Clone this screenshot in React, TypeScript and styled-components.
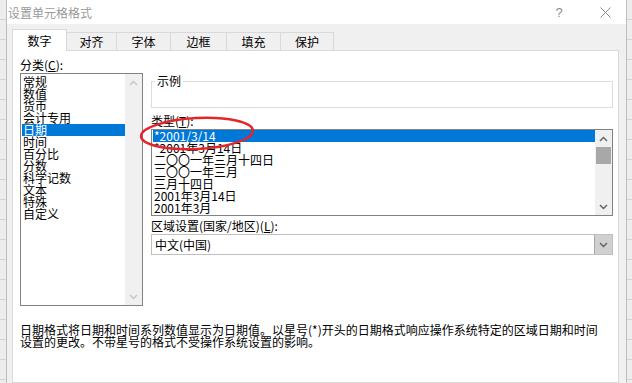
import styled, { createGlobalStyle } from 'styled-components';

const GlobalStyle = createGlobalStyle`
  html, body {
    margin: 0;
    padding: 0;
    overflow: hidden;
  }
  body {
    background: #e6e6e6;
    font-family: "Noto Sans CJK SC", "Liberation Sans", sans-serif;
    font-size: 12px;
    color: #000;
  }
`;

const Screen = styled.div`
  display: flex;
  width: 632px;
  height: 383px;
  overflow: hidden;
`;

const SheetEdge = styled.div<{ $w: number }>`
  width: ${(p) => p.$w}px;
  flex-shrink: 0;
  background: repeating-linear-gradient(
    to bottom,
    #ededed 0,
    #ededed 19px,
    #d4d4d4 19px,
    #d4d4d4 20px
  );
`;

const Dialog = styled.div`
  flex: 1;
  display: flex;
  flex-direction: column;
  background: #f0f0f0;
  border-left: 1px solid #bdbdbd;
  border-right: 1px solid #bdbdbd;
`;

const TitleBar = styled.div`
  height: 24px;
  flex-shrink: 0;
  display: flex;
  align-items: center;
  padding-left: 1px;
  background: #fff;
  color: #9a9a9a;
`;

const TitleButtons = styled.div`
  margin-left: auto;
  display: flex;
  align-items: center;
  gap: 13px;
  padding-right: 3px;
`;

const TitleButton = styled.div<{ $w: number }>`
  width: ${(p) => p.$w}px;
  height: 24px;
  display: flex;
  align-items: center;
  justify-content: center;
  color: #8a8a8a;
  font-family: "Liberation Sans", sans-serif;
  font-size: 13px;
`;

const TabRow = styled.div`
  height: 26px;
  flex-shrink: 0;
  display: flex;
  align-items: flex-end;
  padding-left: 5px;
`;

const Tab = styled.div<{ $active?: boolean; $w: number }>`
  box-sizing: border-box;
  width: ${(p) => p.$w}px;
  height: ${(p) => (p.$active ? 22 : 18)}px;
  margin-bottom: ${(p) => (p.$active ? -1 : 0)}px;
  display: flex;
  align-items: center;
  justify-content: center;
  border: 1px solid #d9d9d9;
  border-bottom: none;
  background: ${(p) => (p.$active ? '#fff' : '#f0f0f0')};
  position: relative;
  z-index: ${(p) => (p.$active ? 1 : 0)};
  line-height: 12px;

  & + & {
    margin-left: -1px;
  }
`;

const Panel = styled.div`
  flex: 1;
  margin: 0 7px 0 5px;
  padding: 6px 5px 0 7px;
  background: #fff;
  border: 1px solid #d9d9d9;
  display: flex;
  flex-direction: column;
`;

const Columns = styled.div`
  display: grid;
  grid-template-columns: 123px 462px;
  column-gap: 8px;
`;

const Column = styled.div`
  display: flex;
  flex-direction: column;
`;

const FieldLabel = styled.div<{ $top?: number }>`
  margin-top: ${(p) => p.$top ?? 0}px;
  line-height: 16px;
  height: 16px;
`;

const ListBox = styled.div<{ $h: number }>`
  box-sizing: border-box;
  height: ${(p) => p.$h}px;
  border: 1px solid #828282;
  display: flex;
  background: #fff;
`;

const ListItems = styled.div<{ $padTop: number }>`
  flex: 1;
  padding: ${(p) => p.$padTop}px 0 0 1px;
  overflow: hidden;
`;

const ListItem = styled.div<{ $selected?: boolean }>`
  height: 12px;
  line-height: 12px;
  padding-left: 1px;
  white-space: nowrap;
  background: ${(p) => (p.$selected ? '#0078d7' : 'transparent')};
  color: ${(p) => (p.$selected ? '#fff' : '#000')};
`;

const ScrollBar = styled.div`
  width: 17px;
  flex-shrink: 0;
  display: flex;
  flex-direction: column;
  background: #f0f0f0;
`;

const ScrollArrow = styled.div`
  height: 17px;
  flex-shrink: 0;
  display: flex;
  align-items: center;
  justify-content: center;
`;

const ScrollTrack = styled.div`
  flex: 1;
`;

const ScrollThumb = styled.div`
  height: 17px;
  margin: 0 1px;
  background: #a8a8a8;
`;

const SampleBox = styled.div`
  position: relative;
  box-sizing: border-box;
  height: 27px;
  margin-top: 24px;
  border: 1px solid #dcdcdc;
`;

const SampleLegend = styled.span`
  position: absolute;
  left: 3px;
  top: -7px;
  padding: 0 2px;
  line-height: 12px;
  background: #fff;
`;

const TypeField = styled.div`
  position: relative;
  display: flex;
  flex-direction: column;
  margin-top: 5px;
`;

const Annotation = styled.svg`
  position: absolute;
  left: -13px;
  top: 1px;
  pointer-events: none;
`;

const Select = styled.div`
  box-sizing: border-box;
  height: 21px;
  display: flex;
  align-items: stretch;
  border: 1px solid #bfbfbf;
  background: #fff;
`;

const SelectValue = styled.div`
  flex: 1;
  display: flex;
  align-items: center;
  padding-left: 3px;
`;

const SelectButton = styled.div`
  width: 17px;
  display: flex;
  align-items: center;
  justify-content: center;
  background: #d0d0d0;
  border-left: 1px solid #a8a8a8;
`;

const Description = styled.div`
  margin-top: 18px;
  line-height: 12px;
`;

const Chevron = ({ dir, color }: { dir: 'up' | 'down'; color: string }) => (
  <svg width="9" height="6" viewBox="0 0 9 6">
    <polyline
      points={dir === 'up' ? '1,5 4.5,1.5 8,5' : '1,1 4.5,4.5 8,1'}
      fill="none"
      stroke={color}
      strokeWidth="1.4"
    />
  </svg>
);

const tabs = [
  { label: '数字', w: 55 },
  { label: '对齐', w: 51 },
  { label: '字体', w: 55 },
  { label: '边框', w: 57 },
  { label: '填充', w: 55 },
  { label: '保护', w: 54 },
];

const categories = [
  '常规',
  '数值',
  '货币',
  '会计专用',
  '日期',
  '时间',
  '百分比',
  '分数',
  '科学记数',
  '文本',
  '特殊',
  '自定义',
];

const dateTypes = [
  '*2001/3/14',
  '*2001年3月14日',
  '二〇〇一年三月十四日',
  '二〇〇一年三月',
  '三月十四日',
  '2001年3月14日',
  '2001年3月',
];

const App = () => {
  return (
    <>
      <GlobalStyle />
      <Screen>
        <SheetEdge $w={6} />
        <Dialog>
          <TitleBar>
            设置单元格格式
            <TitleButtons>
              <TitleButton $w={30}>?</TitleButton>
              <TitleButton $w={36}>
                <svg width="11" height="11" viewBox="0 0 11 11">
                  <path d="M0.5 0.5 L10.5 10.5 M10.5 0.5 L0.5 10.5" stroke="#8a8a8a" strokeWidth="1" />
                </svg>
              </TitleButton>
            </TitleButtons>
          </TitleBar>

          <TabRow>
            {tabs.map((t, i) => (
              <Tab key={t.label} $w={t.w} $active={i === 0}>
                {t.label}
              </Tab>
            ))}
          </TabRow>

          <Panel>
            <Columns>
              <Column>
                <FieldLabel>
                  分类(<u>C</u>):
                </FieldLabel>
                <ListBox $h={233}>
                  <ListItems $padTop={2}>
                    {categories.map((c) => (
                      <ListItem key={c} $selected={c === '日期'}>
                        {c}
                      </ListItem>
                    ))}
                  </ListItems>
                  <ScrollBar>
                    <ScrollArrow>
                      <Chevron dir="up" color="#c4c4c4" />
                    </ScrollArrow>
                    <ScrollTrack />
                    <ScrollArrow>
                      <Chevron dir="down" color="#c4c4c4" />
                    </ScrollArrow>
                  </ScrollBar>
                </ListBox>
              </Column>

              <Column>
                <SampleBox>
                  <SampleLegend>示例</SampleLegend>
                </SampleBox>

                <TypeField>
                  <FieldLabel>
                    类型(<u>T</u>):
                  </FieldLabel>
                  <ListBox $h={87}>
                    <ListItems $padTop={0}>
                      {dateTypes.map((d, i) => (
                        <ListItem key={d} $selected={i === 0}>
                          {d}
                        </ListItem>
                      ))}
                    </ListItems>
                    <ScrollBar>
                      <ScrollArrow>
                        <Chevron dir="up" color="#606060" />
                      </ScrollArrow>
                      <ScrollThumb />
                      <ScrollTrack />
                      <ScrollArrow>
                        <Chevron dir="down" color="#606060" />
                      </ScrollArrow>
                    </ScrollBar>
                  </ListBox>
                  <Annotation width="120" height="40" viewBox="0 0 120 40">
                    <ellipse
                      cx="59"
                      cy="19.5"
                      rx="56"
                      ry="15.5"
                      fill="none"
                      stroke="#e3262a"
                      strokeWidth="2.5"
                      transform="rotate(-3 59 19.5)"
                    />
                  </Annotation>
                </TypeField>

                <FieldLabel $top={2}>
                  区域设置(国家/地区)(<u>L</u>):
                </FieldLabel>
                <Select>
                  <SelectValue>中文(中国)</SelectValue>
                  <SelectButton>
                    <Chevron dir="down" color="#606060" />
                  </SelectButton>
                </Select>
              </Column>
            </Columns>

            <Description>
              日期格式将日期和时间系列数值显示为日期值。以星号(*)开头的日期格式响应操作系统特定的区域日期和时间
              <br />
              设置的更改。不带星号的格式不受操作系统设置的影响。
            </Description>
          </Panel>
        </Dialog>
        <SheetEdge $w={6} />
      </Screen>
    </>
  );
};

export default App;
